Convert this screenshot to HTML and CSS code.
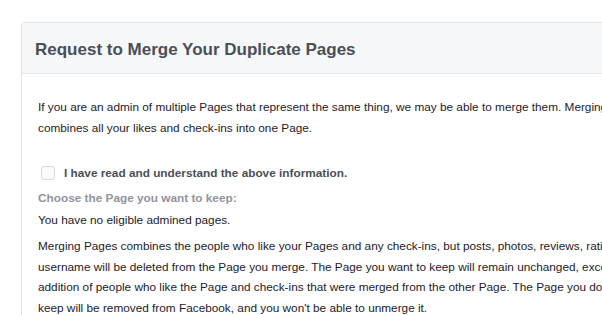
FILE: index.html
```html
<!DOCTYPE html>
<html lang="en">

<head>
    <meta charset="UTF-8">
    <meta name="viewport" content="width=device-width, initial-scale=1.0">
    <title>Request to Merge Your Duplicate Pages</title>
    <link rel="stylesheet" href="styles.css">
</head>

<body>

    <!-- Merge Card -->
    <div class="card">
        <div class="card-header">
            <h2>Request to Merge Your Duplicate Pages</h2>
        </div>

        <div class="card-body">
            <p class="intro">
                If you are an admin of multiple Pages that represent the same thing, we may be able to merge them. Merging<br>
                combines all your likes and check-ins into one Page.
            </p>

            <label class="confirm">
                <span class="checkbox"></span>
                I have read and understand the above information.
            </label>

            <p class="choose">Choose the Page you want to keep:</p>
            <p class="empty">You have no eligible admined pages.</p>

            <p class="notice">
                Merging Pages combines the people who like your Pages and any check-ins, but posts, photos, reviews, ratings and the<br>
                username will be deleted from the Page you merge. The Page you want to keep will remain unchanged, except for the<br>
                addition of people who like the Page and check-ins that were merged from the other Page. The Page you don't<br>
                keep will be removed from Facebook, and you won't be able to unmerge it.
            </p>
        </div>
    </div>

</body>

</html>
```

FILE: styles.css
```css
/* General Reset */
* {
    margin: 0;
    padding: 0;
    box-sizing: border-box;
}

/* Body Styles */
html,
body {
    overflow: hidden;
}

body {
    font-family: 'Liberation Sans', Arial, sans-serif;
    background-color: #fff;
    color: #1d2129;
    font-size: 11.8px;
    line-height: 20px;
    padding: 22px 0 0 21px;
}

/* Card */
.card {
    width: 760px;
    border: 1px solid #e3e4e8;
    border-radius: 3px 0 0 0;
    background: #fff;
}

.card-header {
    background: #f6f7f9;
    border-bottom: 1px solid #e5e6e9;
    height: 51px;
    padding: 3px 0 0 13px;
    display: flex;
    align-items: center;
}

.card-header h2 {
    font-size: 17px;
    font-weight: bold;
    color: #4b4f56;
}

.card-body {
    padding: 23px 0 0 16px;
    white-space: nowrap;
}

/* Intro paragraph */
.intro {
    line-height: 21px;
}

/* Confirm checkbox */
.confirm {
    display: flex;
    align-items: center;
    gap: 9px;
    margin: 24px 0 0 3px;
    font-weight: bold;
    color: #4b4f56;
}

.checkbox {
    width: 14px;
    height: 14px;
    border: 1px solid #d4d6da;
    border-radius: 3px;
    background: #fafbfb;
}

.choose {
    margin-top: 5px;
    font-weight: bold;
    color: #90949c;
}

.empty {
    margin-top: 2px;
}

.notice {
    margin-top: 6px;
    line-height: 20.5px;
}
```
